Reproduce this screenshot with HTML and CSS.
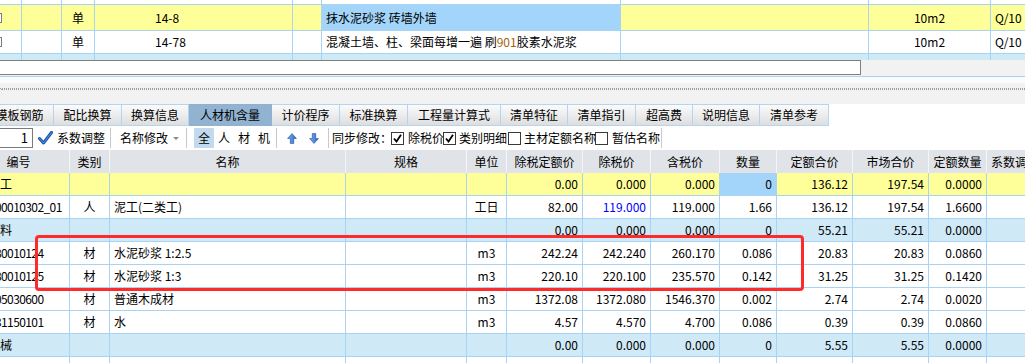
FILE: index.html
```html
<!DOCTYPE html>
<html lang="zh-CN">
<head>
<meta charset="utf-8">
<title>人材机含量</title>
<link rel="stylesheet" href="styles.css">
</head>
<body>
<div class="page">
  <!-- upper list grid -->
  <div class="top-grid">
    <div class="trow stub"><div></div><div></div><div></div><div></div><div></div><div></div><div></div><div></div><div></div></div>
    <div class="trow r1">
      <div class="ck"><span class="tbox"></span></div><div></div><div class="ctr">单</div><div class="code">14-8</div><div></div>
      <div class="name sel">抹水泥砂浆 砖墙外墙</div><div></div><div class="ctr">10m2</div><div class="pl">Q/10</div>
    </div>
    <div class="trow r2">
      <div class="ck"><span class="tbox"></span></div><div></div><div class="ctr">单</div><div class="code">14-78</div><div></div>
      <div class="name">混凝土墙、柱、梁面每增一遍 刷<span class="hl">901</span>胶素水泥浆</div><div></div><div class="ctr">10m2</div><div class="pl">Q/10</div>
    </div>
    <div class="trow part"><div></div><div></div><div></div><div></div><div></div><div></div><div></div><div></div><div></div></div>
  </div>

  <div class="hscroll"><div class="hbox"></div></div>

  <div class="splitter"><div class="grip"></div><div class="grip off"></div></div>

  <!-- tabs -->
  <div class="tabs">
    <div class="tab first">模板钢筋</div>
    <div class="tab">配比换算</div>
    <div class="tab w67">换算信息</div>
    <div class="tab w83 active">人材机含量</div>
    <div class="tab">计价程序</div>
    <div class="tab">标准换算</div>
    <div class="tab w93">工程量计算式</div>
    <div class="tab w67">清单特征</div>
    <div class="tab">清单指引</div>
    <div class="tab w57">超高费</div>
    <div class="tab w67">说明信息</div>
    <div class="tab w69">清单参考</div>
  </div>

  <!-- toolbar -->
  <div class="toolbar">
    <div class="num">1</div>
    <svg class="bigcheck" width="15" height="14" viewBox="0 0 15 14">
      <path d="M1.5 7.5 L5.5 12 L13.5 1.5" fill="none" stroke="#1b4fa8" stroke-width="3" stroke-linecap="round" stroke-linejoin="round"/>
      <path d="M1.5 7.5 L5.5 12 L13.5 1.5" fill="none" stroke="#4d8fe0" stroke-width="1.1" stroke-linecap="round" stroke-linejoin="round"/>
    </svg>
    <span class="lbl coef">系数调整</span>
    <span class="sep s1"></span>
    <span class="lbl rename">名称修改</span>
    <span class="caret"></span>
    <span class="sep s2"></span>
    <div class="filter">
      <span class="fb on">全</span><span class="fb">人</span><span class="fb">材</span><span class="fb">机</span>
    </div>
    <span class="sep s3"></span>
    <svg class="arrow up" width="10" height="11" viewBox="0 0 10 11">
      <defs><linearGradient id="gu" x1="0" y1="0" x2="1" y2="0"><stop offset="0" stop-color="#7fb2f0"/><stop offset="1" stop-color="#2a64c4"/></linearGradient></defs>
      <path d="M5 0.6 L9.4 5.4 L6.7 5.4 L6.7 10.4 L3.3 10.4 L3.3 5.4 L0.6 5.4 Z" fill="url(#gu)" stroke="#2b5fae" stroke-width="0.7"/>
    </svg>
    <svg class="arrow down" width="10" height="11" viewBox="0 0 10 11">
      <defs><linearGradient id="gd" x1="0" y1="0" x2="1" y2="0"><stop offset="0" stop-color="#7fb2f0"/><stop offset="1" stop-color="#2a64c4"/></linearGradient></defs>
      <path d="M5 10.4 L9.4 5.6 L6.7 5.6 L6.7 0.6 L3.3 0.6 L3.3 5.6 L0.6 5.6 Z" fill="url(#gd)" stroke="#2b5fae" stroke-width="0.7"/>
    </svg>
    <span class="sep s4"></span>
    <span class="lbl sync">同步修改：</span>
    <span class="cbx on"><svg width="11" height="11" viewBox="0 0 11 11"><path d="M2 5.5 L4.5 8.5 L9 1.8" fill="none" stroke="#000" stroke-width="1.8"/></svg></span>
    <span class="lbl l1">除税价</span>
    <span class="cbx on"><svg width="11" height="11" viewBox="0 0 11 11"><path d="M2 5.5 L4.5 8.5 L9 1.8" fill="none" stroke="#000" stroke-width="1.8"/></svg></span>
    <span class="lbl l2">类别明细</span>
    <span class="cbx c3"></span>
    <span class="lbl l3">主材定额名称</span>
    <span class="cbx"></span>
    <span class="lbl l4">暂估名称</span>
    <span class="sep s5"></span>
  </div>

  <!-- resource table -->
  <div class="grid">
    <div class="row head">
      <div>编号</div><div>类别</div><div>名称</div><div>规格</div><div>单位</div><div>除税定额价</div><div>除税价</div><div>含税价</div><div>数量</div><div>定额合价</div><div>市场合价</div><div>定额数量</div><div class="lefty">系数调整</div>
    </div>
    <div class="row yel">
      <div class="grp">人工</div><div></div><div></div><div></div><div></div><div class="n">0.00</div><div class="n">0.000</div><div class="n">0.000</div><div class="n sel">0</div><div class="n">136.12</div><div class="n">197.54</div><div class="n">0.0000</div><div></div>
    </div>
    <div class="row">
      <div class="cd">00010302_01</div><div class="ctr">人</div><div class="nm">泥工(二类工)</div><div></div><div class="ctr">工日</div><div class="n">82.00</div><div class="n blue">119.000</div><div class="n">119.000</div><div class="n">1.66</div><div class="n">136.12</div><div class="n">197.54</div><div class="n">1.6600</div><div></div>
    </div>
    <div class="row grpbg">
      <div class="grp">材料</div><div></div><div></div><div></div><div></div><div class="n">0.00</div><div class="n">0.000</div><div class="n">0.000</div><div class="n">0</div><div class="n">55.21</div><div class="n">55.21</div><div class="n">0.0000</div><div></div>
    </div>
    <div class="row">
      <div class="cd">80010124</div><div class="ctr">材</div><div class="nm">水泥砂浆 1:2.5</div><div></div><div class="ctr">m3</div><div class="n">242.24</div><div class="n">242.240</div><div class="n">260.170</div><div class="n">0.086</div><div class="n">20.83</div><div class="n">20.83</div><div class="n">0.0860</div><div></div>
    </div>
    <div class="row">
      <div class="cd">80010125</div><div class="ctr">材</div><div class="nm">水泥砂浆 1:3</div><div></div><div class="ctr">m3</div><div class="n">220.10</div><div class="n">220.100</div><div class="n">235.570</div><div class="n">0.142</div><div class="n">31.25</div><div class="n">31.25</div><div class="n">0.1420</div><div></div>
    </div>
    <div class="row">
      <div class="cd">05030600</div><div class="ctr">材</div><div class="nm">普通木成材</div><div></div><div class="ctr">m3</div><div class="n">1372.08</div><div class="n">1372.080</div><div class="n">1546.370</div><div class="n">0.002</div><div class="n">2.74</div><div class="n">2.74</div><div class="n">0.0020</div><div></div>
    </div>
    <div class="row">
      <div class="cd">31150101</div><div class="ctr">材</div><div class="nm">水</div><div></div><div class="ctr">m3</div><div class="n">4.57</div><div class="n">4.570</div><div class="n">4.700</div><div class="n">0.086</div><div class="n">0.39</div><div class="n">0.39</div><div class="n">0.0860</div><div></div>
    </div>
    <div class="row grpbg">
      <div class="grp">机械</div><div></div><div></div><div></div><div></div><div class="n">0.00</div><div class="n">0.000</div><div class="n">0.000</div><div class="n">0</div><div class="n">5.55</div><div class="n">5.55</div><div class="n">0.0000</div><div></div>
    </div>
    <div class="row">
      <div></div><div></div><div></div><div></div><div></div><div></div><div></div><div></div><div></div><div></div><div></div><div></div><div></div>
    </div>
  </div>

  <div class="mark"></div>
</div>
</body>
</html>
```

FILE: styles.css
```css
:root {
  --line: #a9d3f5;
  --yellow: #ffff99;
  --sel: #a3d5fb;
  --grp: #cfe9f7;
}

* { box-sizing: border-box; }

html, body { margin: 0; padding: 0; }

body {
  width: 1025px;
  height: 363px;
  overflow: hidden;
  background: #fff;
  font-family: "Noto Sans CJK SC", "Microsoft YaHei", sans-serif;
  font-size: 12px;
  color: #000;
}

.page {
  position: relative;
  width: 1025px;
  height: 363px;
  overflow: hidden;
}

/* ---------- top list ---------- */
.trow {
  display: grid;
  grid-template-columns: 42px 40px 33px 198px 29px 299px 248px 122px 80px;
  margin-left: -20px;
  width: 1091px;
}
.trow > div {
  border-right: 1px solid var(--line);
  border-bottom: 1px solid var(--line);
  overflow: hidden;
  white-space: nowrap;
}
.trow.stub { height: 5px; }
.trow.r1 { height: 26px; line-height: 25px; background: var(--yellow); }
.trow.r2 { height: 23px; line-height: 22px; }
.trow.part { height: 6px; background: var(--grp); }
.trow.part > div { border-bottom: none; }

.trow .sel { background: var(--sel); }
.ctr { text-align: center; }
.code { padding-left: 60px; }
.name { padding-left: 4px; }
.pl { padding-left: 4px; }
.hl { color: #a8640c; }

.ck {
  display: flex;
  align-items: center;
  padding-left: 12px;
}
.tbox {
  width: 10px;
  height: 10px;
  border: 1px solid #7c7c7c;
  background: #fff;
}

.hscroll {
  display: flex;
  height: 17px;
  background: #f2f2f2;
  border-bottom: 1px solid var(--line);
}
.hbox {
  width: 863px;
  height: 15px;
  margin-left: -2px;
  border: 1px solid #7f7f7f;
  background: #fff;
}

.splitter {
  height: 27px;
  background: linear-gradient(#fbfbfb 0 6px, #f2f2f2 6px);
  padding-top: 11px;
}
.grip {
  height: 1px;
  border-top: 1px dotted #9c9c9c;
}
.grip.off { margin-left: 1px; }

/* ---------- tabs ---------- */
.tabs {
  display: flex;
  height: 22px;
  margin-left: -15px;
  background: #fff;
}
.tab {
  flex: none;
  width: 68px;
  height: 22px;
  line-height: 20px;
  text-align: center;
  white-space: nowrap;
  border-top: 1px solid #b3d5f1;
  border-bottom: 1px solid #b3d5f1;
  border-right: 1px solid #b3d5f1;
  background: linear-gradient(#fbfbfb, #dedede);
}
.tab.first { width: 69px; border-left: 1px solid #b3d5f1; }
.tab.w67 { width: 67px; }
.tab.w83 { width: 83px; }
.tab.w93 { width: 93px; }
.tab.w57 { width: 57px; }
.tab.w69 { width: 69px; }
.tab.active {
  background: #92b2d1;
  border-color: #8fb0d0;
}

/* ---------- toolbar ---------- */
.toolbar {
  display: flex;
  align-items: center;
  height: 24px;
  white-space: nowrap;
  background: #fff;
}
.num {
  width: 41px;
  height: 20px;
  margin-left: -8px;
  border: 1px solid #7a7a7a;
  text-align: right;
  padding-right: 4px;
  line-height: 18px;
  font-size: 13px;
}
.bigcheck { margin-left: 5px; flex: none; }
.lbl { font-size: 12px; line-height: 20px; }
.coef { margin-left: 4px; }
.sep {
  width: 1px;
  height: 20px;
  background: #c9c9c9;
  flex: none;
}
.s1 { margin-left: 5px; }
.rename { margin-left: 9px; }
.caret {
  margin-left: 5px;
  width: 0;
  height: 0;
  border-left: 3px solid transparent;
  border-right: 3px solid transparent;
  border-top: 3px solid #8a8a8a;
}
.s2 { margin-left: 7px; }
.filter { display: flex; margin-left: 7px; }
.fb {
  width: 20px;
  height: 20px;
  line-height: 20px;
  text-align: center;
}
.fb.on { background: #c3d9ed; }
.s3 { margin-left: 2px; }
.arrow { flex: none; }
.arrow.up { margin-left: 10px; }
.arrow.down { margin-left: 12px; }
.s4 { margin-left: 9px; }
.sync { margin-left: 3px; }
.cbx {
  flex: none;
  width: 13px;
  height: 13px;
  border: 1px solid #3a3a3a;
  background: #fff;
  display: flex;
  align-items: center;
  justify-content: center;
  margin-left: -1px;
}
.l1 { margin-left: 4px; }
.l2 { margin-left: 3px; }
.c3 { margin-left: 1px; }
.l3 { margin-left: 3px; }
.l4 { margin-left: 4px; }
.s5 { margin-left: 1px; }

/* ---------- resource grid ---------- */
.grid { margin-left: -32px; width: 1117px; }
.row {
  display: grid;
  grid-template-columns: 102px 40px 236px 121px 40px 76px 68px 69px 57px 76px 76px 58px 98px;
  height: 23px;
  line-height: 22px;
}
.row > div {
  border-right: 1px solid var(--line);
  border-bottom: 1px solid var(--line);
  overflow: hidden;
  white-space: nowrap;
}
.row.head {
  background: #e0e4e9;
  line-height: 23px;
}
.row.head > div {
  text-align: center;
  border-right: 1px solid #f3f5f8;
  border-bottom: none;
}
.row.head > div.lefty { text-align: left; padding-left: 4px; }
.row.yel { background: var(--yellow); }
.row.grpbg { background: var(--grp); }
.row .sel { background: var(--sel); }
.grp { padding-left: 20px; }
.cd { padding-left: 27px; letter-spacing: -0.6px; }
.nm { padding-left: 4px; }
.n { text-align: right; padding-right: 4px; }
.blue { color: #0000ff; }

/* ---------- annotation ---------- */
.mark {
  position: absolute;
  left: 35px;
  top: 235px;
  width: 769px;
  height: 56px;
  border: 3px solid #ff2a2a;
  border-radius: 4px;
  pointer-events: none;
}
```
